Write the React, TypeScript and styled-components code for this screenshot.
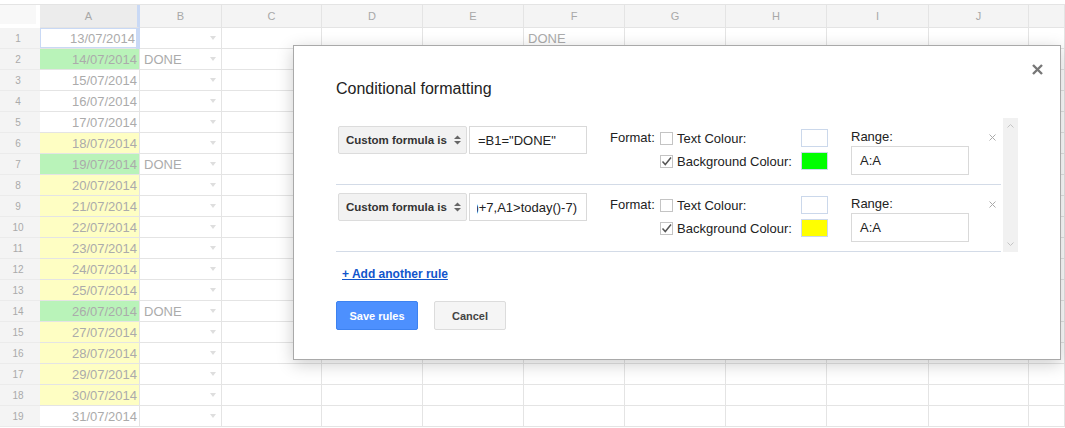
import React from 'react';
import styled, { createGlobalStyle } from 'styled-components';

const GlobalStyle = createGlobalStyle`
  html, body { margin: 0; padding: 0; background: #ffffff; }
  body { font-family: "Liberation Sans", Arial, sans-serif; }
  * { box-sizing: border-box; }
`;

const COLS = '40px 100px 82px 100px 101px 101px 101px 101px 101px 102px 100px 1fr';
const SEL = '#c9d9f5';
const GRID = '#e4e4e4';

const Page = styled.div`
  position: relative;
  width: 1065px;
  height: 428px;
  overflow: hidden;
  background: #fff;
`;

const Sheet = styled.div`
  display: flex;
  flex-direction: column;
  padding-top: 4px;
`;

const GridRow = styled.div<{ $head?: boolean }>`
  display: grid;
  grid-template-columns: ${COLS};
  height: ${(p) => (p.$head ? 24 : 21)}px;
  ${(p) => (p.$head ? `border-top: 1px solid ${GRID};` : '')}
`;

const Corner = styled.div`
  background: #f8f8f8;
  border-right: 4px solid #ffffff;
  border-bottom: 4px solid #ffffff;
`;

const ColHead = styled.div<{ $sel?: boolean }>`
  display: flex;
  align-items: center;
  justify-content: center;
  background: ${(p) => (p.$sel ? '#ececec' : '#f4f4f4')};
  border-right: ${(p) => (p.$sel ? `3px solid ${SEL}` : `1px solid ${GRID}`)};
  border-bottom: 1px solid ${GRID};
  color: #a8a8a8;
  font-size: 11px;
`;

const RowHead = styled.div`
  display: flex;
  align-items: center;
  justify-content: center;
  padding-right: 4px;
  background: #f4f4f4;
  border-bottom: 1px solid #ebebeb;
  color: #aaaaaa;
  font-size: 10px;
`;

const Cell = styled.div<{ $bg?: string; $right?: boolean }>`
  position: relative;
  display: flex;
  align-items: center;
  justify-content: ${(p) => (p.$right ? 'flex-end' : 'space-between')};
  height: 21px;
  padding: 0 4px 0 4px;
  background: ${(p) => p.$bg || '#ffffff'};
  border-right: 1px solid ${GRID};
  border-bottom: 1px solid ${GRID};
  color: #ababab;
  font-size: 13px;
  white-space: nowrap;
`;

const DateCell = styled(Cell)<{ $selected?: boolean }>`
  padding-right: 2px;
  border-right: ${(p) => (p.$selected ? `3px solid ${SEL}` : `1px solid ${GRID}`)};
  ${(p) => (p.$selected ? `box-shadow: inset 0 0 0 1px ${SEL};` : '')}
`;

const Handle = styled.span`
  position: absolute;
  right: -5px;
  bottom: -3px;
  width: 6px;
  height: 6px;
  background: ${SEL};
`;

const DropArrow = styled.span`
  width: 0;
  height: 0;
  margin-right: 1px;
  border-left: 3px solid transparent;
  border-right: 3px solid transparent;
  border-top: 4px solid #dedede;
`;

/* ---------------- dialog ---------------- */

const Dialog = styled.div`
  position: absolute;
  left: 293px;
  top: 45px;
  width: 768px;
  background: #ffffff;
  border: 1px solid #a9a9a9;
  box-shadow: 0 4px 16px rgba(0, 0, 0, 0.2);
  padding: 33px 42px 29px 42px;
  color: #222222;
`;

const CloseButton = styled.div`
  position: absolute;
  right: 17px;
  top: 18px;
  width: 11px;
  height: 11px;
  display: flex;
`;

const Title = styled.div`
  font-size: 16px;
  line-height: 20px;
  height: 20px;
  color: #222222;
`;

const RulesArea = styled.div`
  display: flex;
  gap: 2px;
  margin-top: 19px;
  width: 682px;
`;

const RuleList = styled.div`
  width: 665px;
  display: flex;
  flex-direction: column;
`;

const Rule = styled.div`
  height: 67px;
  border-bottom: 1px solid #d3dbe7;
  padding: 8px 0 0 2px;
  display: flex;
  align-items: flex-start;
`;

const SelectBox = styled.div`
  width: 129px;
  height: 28px;
  display: flex;
  align-items: center;
  justify-content: space-between;
  padding: 0 5px 0 7px;
  background: #f2f2f2;
  border: 1px solid #dcdcdc;
  border-radius: 2px;
  font-size: 11.5px;
  font-weight: bold;
  color: #333333;
  white-space: nowrap;
`;

const TextInput = styled.div<{ $w?: number; $h?: number }>`
  width: ${(p) => p.$w || 118}px;
  height: ${(p) => p.$h || 28}px;
  display: flex;
  align-items: center;
  padding: 0 9px 0 8px;
  background: #ffffff;
  border: 1px solid #d9d9d9;
  font-size: 13px;
  color: #222222;
`;

const FormulaInput = styled(TextInput)`
  margin-left: 2px;
  padding: 0 9px 0 7px;
`;

const Clip = styled.div<{ $end?: boolean }>`
  flex: 1;
  display: flex;
  justify-content: ${(p) => (p.$end ? 'flex-end' : 'flex-start')};
  padding-left: ${(p) => (p.$end ? 0 : 1)}px;
  overflow: hidden;
  white-space: nowrap;
`;

const FormatBlock = styled.div`
  display: flex;
  margin-left: 23px;
  margin-top: 3px;
`;

const FormatLabel = styled.div`
  width: 50px;
  height: 18px;
  line-height: 18px;
  font-size: 13px;
  color: #222222;
`;

const FormatLines = styled.div`
  display: flex;
  flex-direction: column;
  gap: 5px;
  width: 168px;
`;

const FormatLine = styled.div`
  display: flex;
  align-items: center;
  height: 18px;
  font-size: 13px;
  color: #222222;
`;

const Check = styled.span`
  width: 13px;
  height: 13px;
  margin-right: 4px;
  border: 1px solid #c4c4c4;
  background: #ffffff;
  display: flex;
  align-items: center;
  justify-content: center;
`;

const LineText = styled.span`
  flex: 1;
  white-space: nowrap;
`;

const Swatch = styled.span<{ $color: string }>`
  width: 27px;
  height: 18px;
  background: ${(p) => p.$color};
  border: 1px solid #cbd8eb;
`;

const RangeBlock = styled.div`
  display: flex;
  flex-direction: column;
  margin-left: 23px;
`;

const RangeLabel = styled.div`
  margin-top: 2px;
  height: 18px;
  line-height: 18px;
  font-size: 13px;
  color: #222222;
`;

const Remove = styled.div`
  margin-left: 20px;
  margin-top: 8px;
  width: 7px;
  height: 7px;
  display: flex;
`;

const Scrollbar = styled.div`
  width: 15px;
  height: 134px;
  background: #f1f1f1;
  display: flex;
  flex-direction: column;
  justify-content: space-between;
  align-items: center;
  padding: 6px 0 6px 0;
`;

const AddLink = styled.a`
  display: inline-block;
  margin: 15px 0 0 6px;
  font-size: 12px;
  line-height: 14px;
  font-weight: bold;
  color: #1155cc;
  text-decoration: underline;
`;

const Buttons = styled.div`
  display: flex;
  gap: 16px;
  margin-top: 19px;
`;

const Button = styled.div<{ $primary?: boolean }>`
  height: 29px;
  width: ${(p) => (p.$primary ? 82 : 72)}px;
  display: flex;
  align-items: center;
  justify-content: center;
  border-radius: 2px;
  font-size: 11px;
  font-weight: bold;
  background: ${(p) => (p.$primary ? '#4d90fe' : '#f5f5f5')};
  border: 1px solid ${(p) => (p.$primary ? '#3d82f0' : '#dcdcdc')};
  color: ${(p) => (p.$primary ? '#ffffff' : '#444444')};
`;

/* ---------------- icons ---------------- */

const UpDown = () => (
  <svg width="7" height="10" viewBox="0 0 7 10">
    <path d="M0 4 L3.5 0.5 L7 4 Z" fill="#666" />
    <path d="M0 6 L3.5 9.5 L7 6 Z" fill="#666" />
  </svg>
);

const Tick = () => (
  <svg width="11" height="11" viewBox="0 0 11 11">
    <path d="M1.5 5.5 L4.3 8.5 L10 1.5" fill="none" stroke="#555" strokeWidth="1.5" />
  </svg>
);

const CloseIcon = () => (
  <svg width="11" height="11" viewBox="0 0 11 11">
    <path d="M1 1 L10 10 M10 1 L1 10" stroke="#777" strokeWidth="2.4" />
  </svg>
);

const SmallX = () => (
  <svg width="7" height="7" viewBox="0 0 7 7">
    <path d="M0.5 0.5 L6.5 6.5 M6.5 0.5 L0.5 6.5" stroke="#aaa" strokeWidth="1" />
  </svg>
);

const Chevron = ({ up }: { up?: boolean }) => (
  <svg width="7" height="4" viewBox="0 0 7 4">
    <path d={up ? 'M0.5 3.5 L3.5 0.5 L6.5 3.5' : 'M0.5 0.5 L3.5 3.5 L6.5 0.5'} fill="none" stroke="#c4c4c4" strokeWidth="1" />
  </svg>
);

/* ---------------- data ---------------- */

const GREEN = '#b9f3b9';
const YELLOW = '#fefec3';

type RowData = { d: string; bg?: string; b?: string; f?: string; sel?: boolean };

const rows: RowData[] = [
  { d: '13/07/2014', sel: true, f: 'DONE' },
  { d: '14/07/2014', bg: GREEN, b: 'DONE' },
  { d: '15/07/2014' },
  { d: '16/07/2014' },
  { d: '17/07/2014' },
  { d: '18/07/2014', bg: YELLOW },
  { d: '19/07/2014', bg: GREEN, b: 'DONE' },
  { d: '20/07/2014', bg: YELLOW },
  { d: '21/07/2014', bg: YELLOW },
  { d: '22/07/2014', bg: YELLOW },
  { d: '23/07/2014', bg: YELLOW },
  { d: '24/07/2014', bg: YELLOW },
  { d: '25/07/2014', bg: YELLOW },
  { d: '26/07/2014', bg: GREEN, b: 'DONE' },
  { d: '27/07/2014', bg: YELLOW },
  { d: '28/07/2014', bg: YELLOW },
  { d: '29/07/2014', bg: YELLOW },
  { d: '30/07/2014', bg: YELLOW },
  { d: '31/07/2014' },
];

const letters = ['A', 'B', 'C', 'D', 'E', 'F', 'G', 'H', 'I', 'J', ''];

type RuleData = { formula: string; color: string; scrolled?: boolean };
const rules: RuleData[] = [
  { formula: '=B1="DONE"', color: '#00ff00' },
  { formula: ')+7,A1>today()-7)', color: '#ffff00', scrolled: true },
];

export default function App() {
  return (
    <Page>
      <GlobalStyle />
      <Sheet>
        <GridRow $head>
          <Corner />
          {letters.map((l, i) => (
            <ColHead key={i} $sel={l === 'A'}>
              {l}
            </ColHead>
          ))}
        </GridRow>
        {rows.map((r, i) => (
          <GridRow key={i}>
            <RowHead>{i + 1}</RowHead>
            <DateCell $right $bg={r.bg} $selected={r.sel}>
              {r.d}
              {r.sel && <Handle />}
            </DateCell>
            <Cell>
              <span>{r.b || ''}</span>
              <DropArrow />
            </Cell>
            <Cell />
            <Cell />
            <Cell />
            <Cell>{r.f || ''}</Cell>
            <Cell />
            <Cell />
            <Cell />
            <Cell />
            <Cell />
          </GridRow>
        ))}
      </Sheet>

      <Dialog>
        <CloseButton>
          <CloseIcon />
        </CloseButton>
        <Title>Conditional formatting</Title>
        <RulesArea>
          <RuleList>
            {rules.map((rule, i) => (
              <Rule key={i}>
                <SelectBox>
                  <span>Custom formula is</span>
                  <UpDown />
                </SelectBox>
                <FormulaInput>
                  <Clip $end={rule.scrolled}>{rule.formula}</Clip>
                </FormulaInput>
                <FormatBlock>
                  <FormatLabel>Format:</FormatLabel>
                  <FormatLines>
                    <FormatLine>
                      <Check />
                      <LineText>Text Colour:</LineText>
                      <Swatch $color="#ffffff" />
                    </FormatLine>
                    <FormatLine>
                      <Check>
                        <Tick />
                      </Check>
                      <LineText>Background Colour:</LineText>
                      <Swatch $color={rule.color} />
                    </FormatLine>
                  </FormatLines>
                </FormatBlock>
                <RangeBlock>
                  <RangeLabel>Range:</RangeLabel>
                  <TextInput $h={29}>A:A</TextInput>
                </RangeBlock>
                <Remove>
                  <SmallX />
                </Remove>
              </Rule>
            ))}
          </RuleList>
          <Scrollbar>
            <Chevron up />
            <Chevron />
          </Scrollbar>
        </RulesArea>
        <AddLink>+ Add another rule</AddLink>
        <Buttons>
          <Button $primary>Save rules</Button>
          <Button>Cancel</Button>
        </Buttons>
      </Dialog>
    </Page>
  );
}
